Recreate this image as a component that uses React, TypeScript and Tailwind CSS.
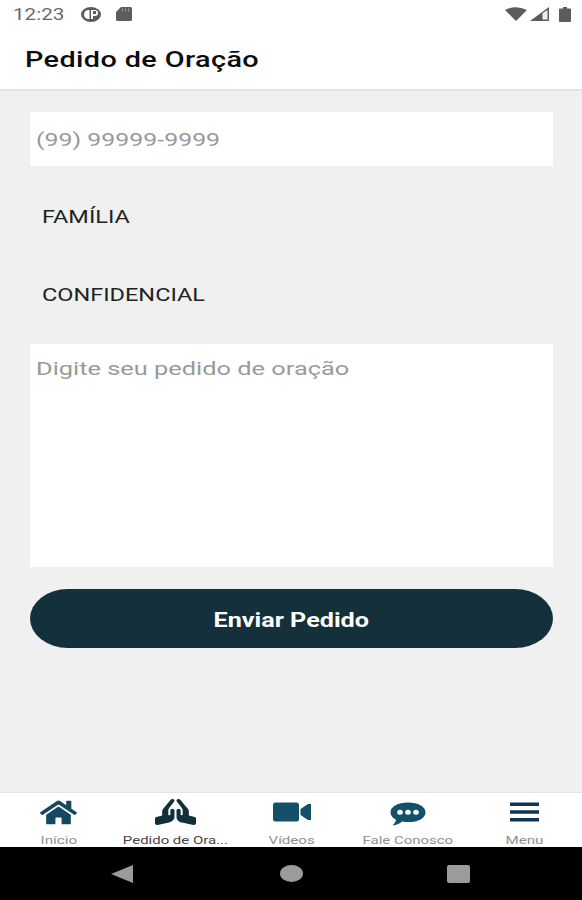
import type { ReactNode } from "react";
import { FaHome, FaPrayingHands } from "react-icons/fa";

function StatusBar() {
  return (
    <div className="flex h-7 items-center bg-white text-[#5c5c5c]">
      <span className="ml-[13px] w-[68px] pt-0.5 text-[16px] leading-7 whitespace-nowrap text-[#6a6a6a]">
        <span className="inline-block origin-left scale-x-[1.29]">12:23</span>
      </span>
      <svg className="h-[15px] w-5" viewBox="0 0 20 15" preserveAspectRatio="none">
        <ellipse cx="10" cy="7.5" rx="10" ry="7.5" fill="currentColor" />
        <path
          d="M8.5 3H7.5A4.5 4.5 0 0 0 7.5 12H8.5ZM10 3H14A3 3 0 0 1 14 9H12V12H10Z"
          fill="white"
        />
        <path d="M12 4h3v3h-3Z" fill="currentColor" />
      </svg>
      <svg className="ml-[15px] h-[14px] w-4" viewBox="0 0 16 14">
        <path
          d="M5 0H14.5Q16 0 16 1.5V12.5Q16 14 14.5 14H1.5Q0 14 0 12.5V5Z"
          fill="currentColor"
        />
        <path d="M6.5 1.5v3M9.5 1.5v3M12.5 1.5v3" stroke="#999" strokeWidth="1" />
      </svg>
      <svg className="ml-auto h-[14px] w-[22px]" viewBox="0 0 22 14">
        <path d="M0 3Q11-2.5 22 3L11 14Z" fill="currentColor" />
      </svg>
      <svg className="ml-[3px] h-[14px] w-[19px]" viewBox="0 0 19 14">
        <path d="M0 14L19 0V14Z" fill="currentColor" />
        <path d="M12.5 6.2L17.5 3V12.5H12.5Z" fill="#eee" />
      </svg>
      <svg className="mr-[11px] ml-[10px] h-[15px] w-[12px]" viewBox="0 0 12 15">
        <path d="M4 0h4v1.5H11q1 0 1 1V14q0 1-1 1H1q-1 0-1-1V2.5q0-1 1-1H4Z" fill="currentColor" />
      </svg>
    </div>
  );
}

function VideoIcon() {
  return (
    <svg className="h-5 w-[38px]" viewBox="0 0 38 20" fill="#14506a">
      <rect y="0.5" width="26" height="19" rx="2.5" />
      <path d="M27.5 7L35 2H38V18H35L27.5 13Z" />
    </svg>
  );
}

function ChatIcon() {
  return (
    <svg className="mt-[3px] h-6 w-9" viewBox="0 0 36 24">
      <path
        d="M18 0.5C8 0.5 0.5 4.5 0.5 10.2C0.5 13.2 2.5 16 6 17.8C6 19.5 4.5 21.5 2.5 23.5C7 23 10 21.5 12 19.5C25 21.5 35.5 17.5 35.5 10.2C35.5 4.5 28 0.5 18 0.5Z"
        fill="#14506a"
      />
      <g fill="white">
        <ellipse cx="10" cy="10.2" rx="2.8" ry="2.5" />
        <ellipse cx="18" cy="10.2" rx="2.8" ry="2.5" />
        <ellipse cx="26" cy="10.2" rx="2.8" ry="2.5" />
      </g>
    </svg>
  );
}

function MenuIcon() {
  return (
    <svg className="h-5 w-[29px]" viewBox="0 0 29 20" fill="#0f3455">
      <path d="M0 0.5h29v3.5H0ZM0 8.3h29v3.4H0ZM0 16h29v3.5H0Z" />
    </svg>
  );
}

function Tab({ icon, children }: { icon: ReactNode; children: ReactNode }) {
  return (
    <div className="flex h-full min-w-0 flex-1 flex-col items-center pl-px">
      <div className="flex h-[38px] shrink-0 items-center">{icon}</div>
      <div className="text-[11.5px] leading-[18px] whitespace-nowrap">{children}</div>
    </div>
  );
}

export default function App() {
  return (
    <div className="flex h-[900px] w-[582px] flex-col overflow-hidden bg-[#f0f0f0] font-['Roboto','Liberation_Sans',sans-serif]">
      <StatusBar />
      <header className="flex h-[63px] items-center border-b-2 border-[#e2e2e2] bg-white pt-[3px] pl-[25px]">
        <h1 className="origin-left scale-x-[1.31] text-[22px] leading-none font-medium tracking-[0.3px] text-[#0c0c0c]">
          Pedido de Oração
        </h1>
      </header>

      <main className="flex flex-1 flex-col px-[29px] pt-[21px]">
        <div className="ml-px flex h-[54px] items-center bg-white pt-[2px] pl-[6px] text-[19px] text-[#999]">
          <span className="origin-left scale-x-[1.31]">(99) 99999-9999</span>
        </div>
        <div className="mt-3 flex h-[78px] items-center pt-px pl-[13px] text-[18.5px] text-[#222]">
          <span className="origin-left scale-x-[1.27]">FAMÍLIA</span>
        </div>
        <div className="flex h-[78px] items-center pt-px pl-[13px] text-[18.5px] text-[#222]">
          <span className="origin-left scale-x-[1.27]">CONFIDENCIAL</span>
        </div>
        <div className="mt-[10px] ml-px flex h-[223px] bg-white pt-[11px] pl-[6px] text-[19px] text-[#999]">
          <span className="h-7 origin-left scale-x-[1.335] whitespace-nowrap">
            Digite seu pedido de oração
          </span>
        </div>
        <button className="mt-[22px] ml-px flex h-[59px] items-center justify-center rounded-[38px/29.5px] bg-[#14303b] pt-1 text-[19.5px] font-bold text-white">
          <span className="scale-x-[1.29]">Enviar Pedido</span>
        </button>
      </main>

      <nav className="flex h-[55px] border-t border-[#e3e3e3] bg-white text-[#909090]">
        <Tab icon={<FaHome className="h-[27px] w-[37px] text-[#164761]" preserveAspectRatio="none" />}>
          <span className="inline-block scale-x-[1.32]">Início</span>
        </Tab>
        <Tab icon={<FaPrayingHands className="h-[26px] w-[41px] text-[#12303a]" preserveAspectRatio="none" />}>
          <span className="inline-block scale-x-[1.3] text-[#444]">Pedido de Ora...</span>
        </Tab>
        <Tab icon={<VideoIcon />}>
          <span className="inline-block scale-x-[1.31]">Vídeos</span>
        </Tab>
        <Tab icon={<ChatIcon />}>
          <span className="inline-block scale-x-[1.3]">Fale Conosco</span>
        </Tab>
        <Tab icon={<MenuIcon />}>
          <span className="inline-block scale-x-[1.32]">Menu</span>
        </Tab>
      </nav>

      <div className="flex h-[53px] items-center bg-black text-[#9b9b9b]">
        <svg className="ml-[111px] h-[18px] w-[22px]" viewBox="0 0 22 18">
          <path d="M0 9L22 0V18Z" fill="currentColor" />
        </svg>
        <div className="ml-[147px] h-[17px] w-[23px] rounded-[50%] bg-[#9b9b9b]" />
        <div className="ml-[144px] h-[18px] w-[23px] rounded-[2px] bg-[#9b9b9b]" />
      </div>
    </div>
  );
}
